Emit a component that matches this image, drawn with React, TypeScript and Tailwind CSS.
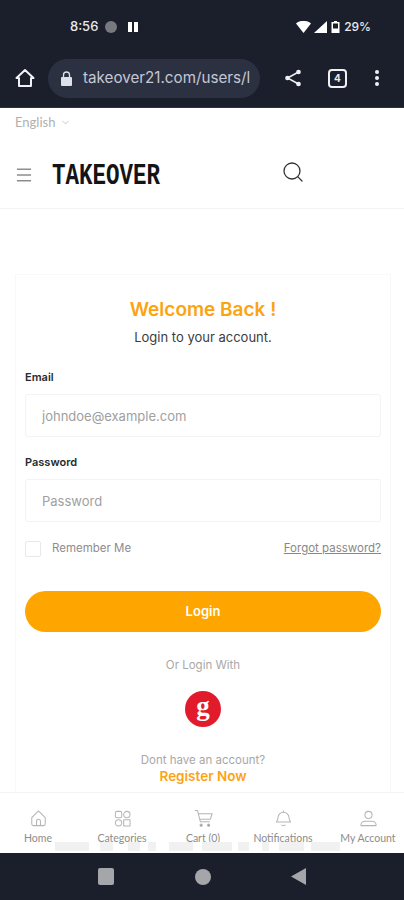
import { ChevronDown, Menu, Search } from "lucide-react";

const sans = "font-['Inter','Liberation_Sans',sans-serif]";

const navItems = [
  {
    label: "Home",
    icon: (
      <>
        <path d="M3.500 11 12 2.500 20.500 11v8a2 2 0 0 1-2 2h-13a2 2 0 0 1-2-2z" />
        <path d="M9.500 21v-5.500a2.500 2.500 0 0 1 5 0V21" />
      </>
    ),
  },
  {
    label: "Categories",
    icon: (
      <>
        <rect x="3" y="3" width="8" height="8" rx="2" />
        <circle cx="17.500" cy="7" r="4" />
        <circle cx="7" cy="17.500" r="4" />
        <rect x="13.500" y="13.500" width="8" height="8" />
      </>
    ),
  },
  {
    label: "Cart (0)",
    icon: (
      <>
        <path d="M1 2h3.500l3.500 14h12" />
        <path d="M5.500 6H23l-2.500 7H7.500" />
        <circle cx="9" cy="20.500" r="1.400" fill="currentColor" />
        <circle cx="18.500" cy="20.500" r="1.400" fill="currentColor" />
      </>
    ),
  },
  {
    label: "Notifications",
    icon: (
      <>
        <path d="M12 4a7 7 0 0 1 7 7c0 2.500 1 4 2 5.500H3c1-1.500 2-3 2-5.500a7 7 0 0 1 7-7z" />
        <path d="M12 2v2M9.500 20c.7 1.300 4.300 1.300 5 0" />
      </>
    ),
  },
  {
    label: "My Account",
    icon: (
      <>
        <circle cx="12" cy="7.500" r="4.500" />
        <path d="M2.500 21v-1.500c0-2.500 3-4 5-4h9c2 0 5 1.500 5 4V21z" />
      </>
    ),
  },
];

const ghostBars = [
  { w: 34, gap: 55 },
  { w: 13, gap: 11 },
  { w: 12, gap: 15 },
  { w: 8, gap: 8 },
  { w: 24, gap: 13 },
  { w: 30, gap: 9 },
  { w: 11, gap: 6 },
  { w: 7, gap: 13 },
  { w: 25, gap: 10 },
  { w: 29, gap: 7 },
];

function Field({ label, placeholder }: { label: string; placeholder: string }) {
  return (
    <div>
      <label className="block text-[11px] leading-[15px] font-semibold text-[#2a2a2a]">{label}</label>
      <input
        readOnly
        placeholder={placeholder}
        className="mt-[9px] block h-[43px] w-full rounded-[3px] border border-[#f3f3f3] bg-white px-4 text-[13px] outline-none placeholder:text-[#a0a0a0]"
      />
    </div>
  );
}

export default function App() {
  return (
    <div className={`flex h-[900px] w-[404px] flex-col overflow-hidden bg-white ${sans}`}>
      {/* android chrome */}
      <div className="h-[108px] shrink-0 border-b border-[#2c2f4a] bg-[#1b1f2b] text-[#e8eaef]">
        <div className="flex h-[52px] items-center pt-[1px] pr-[33px] pl-[70px]">
          <span className="text-[13px] font-medium">8:56</span>
          <span className="ml-[7px] h-[12px] w-[12px] rounded-full bg-[#77797f]" />
          <span className="ml-[11px] flex h-[10px] w-[10px] justify-between">
            <span className="w-[4px] bg-white" />
            <span className="w-[4px] bg-white" />
          </span>
          <div className="ml-auto flex items-center">
            <svg width="15" height="12" viewBox="0 0 15 12" fill="white">
              <path d="M0 2.500C4-1 11-1 15 2.500L7.500 12z" />
            </svg>
            <svg width="13" height="12" viewBox="0 0 13 12" fill="white" className="ml-[3px]">
              <path d="M13 0v12H0z" />
            </svg>
            <svg width="9" height="12" viewBox="0 0 9 12" className="ml-[4px]">
              <path d="M3 0h3v1h2.500v11H.500V1H3z" fill="white" />
              <rect x="2" y="2.500" width="5" height="5" fill="#1b1f2b" />
            </svg>
            <span className="ml-[4px] text-[12px] font-medium">29%</span>
          </div>
        </div>
        <div className="flex h-[55px] items-center pb-[3px] pl-[15px]">
          <svg width="20" height="20" viewBox="0 0 20 20" fill="none" stroke="#f1f2f5" strokeWidth="2">
            <path d="M1.500 10 10 2l8.500 8H16v8H4v-8z" strokeLinejoin="round" />
          </svg>
          <div className="ml-[13px] flex h-[39px] w-[212px] items-center overflow-hidden rounded-full bg-[#2c3142] pl-[13px]">
            <svg width="11" height="15" viewBox="0 0 11 15" fill="#dfe1ea" className="shrink-0">
              <path d="M1 6h9a1 1 0 0 1 1 1v7a1 1 0 0 1-1 1H1a1 1 0 0 1-1-1V7a1 1 0 0 1 1-1z" />
              <path d="M2.500 6V4a3 3 0 0 1 6 0v2" fill="none" stroke="#dfe1ea" strokeWidth="1.300" />
            </svg>
            <span className="ml-[11px] text-[15.200px] whitespace-nowrap text-[#c5c8d3]">takeover21.com/users/l</span>
          </div>
          <svg width="18" height="18" viewBox="0 0 18 18" fill="#eef0f4" stroke="#eef0f4" strokeWidth="1.500" className="ml-[24px]">
            <circle cx="14.500" cy="3" r="1.600" />
            <circle cx="14.500" cy="15" r="1.600" />
            <circle cx="3.500" cy="9" r="1.600" />
            <path d="M14.500 3 3.500 9l11 6" fill="none" />
          </svg>
          <span className="ml-[26px] flex h-[19px] w-[19px] items-center justify-center rounded-[4px] border-2 border-[#eef0f4] text-[10px] font-bold">4</span>
          <span className="ml-[28px] flex h-[16px] flex-col justify-between">
            <span className="h-[4px] w-[4px] rounded-full bg-[#eef0f4]" />
            <span className="h-[4px] w-[4px] rounded-full bg-[#eef0f4]" />
            <span className="h-[4px] w-[4px] rounded-full bg-[#eef0f4]" />
          </span>
        </div>
      </div>

      {/* page */}
      <div className="min-h-0 flex-1 overflow-hidden">
        <div className="flex h-[30px] items-center pb-[1px] pl-[15px] font-['Lato',sans-serif] text-[13px] text-[#b0b0b0]">
          English
          <ChevronDown size={11} className="ml-[5px]" strokeWidth={1.500} />
        </div>
        <div className="flex h-[71px] items-center border-b border-[#f3f3f3] pt-[3px] pl-[14px]">
          <Menu size={20} strokeWidth={1.200} className="text-[#555]" />
          <span className="ml-[18px] inline-block w-[110px] origin-left translate-y-[1px] scale-x-[0.75] font-['Liberation_Mono',monospace] text-[30px] leading-none font-bold whitespace-nowrap text-[#141414]">
            TAKEOVER
          </span>
          <Search size={24} strokeWidth={1.300} className="ml-[119px] -translate-y-[3px] text-[#333]" />
        </div>

        <div className="mt-[65px] ml-[15px] w-[376px] border border-[#f8f8f8] px-[9px] pt-[21px] pb-[8px]">
          <h1 className="text-center text-[19px] leading-[28px] font-semibold text-[#fca311]">Welcome Back !</h1>
          <p className="mt-[3px] text-center text-[13px] leading-[20px] text-[#3c3c3c]">Login to your account.</p>

          <div className="mt-[23px] flex flex-col gap-[18px]">
            <Field label="Email" placeholder="johndoe@example.com" />
            <Field label="Password" placeholder="Password" />
          </div>

          <div className="mt-[18px] flex items-center justify-between">
            <div className="flex items-center">
              <span className="h-[16px] w-[16px] rounded-[2px] border border-[#e8e8e8]" />
              <span className="ml-[11px] text-[11.500px] text-[#8d8d8d]">Remember Me</span>
            </div>
            <a className="text-[11.500px] text-[#888] underline">Forgot password?</a>
          </div>

          <button className="mt-[34px] h-[41px] w-full rounded-full bg-[#ffa500] text-[13px] font-semibold text-white">
            Login
          </button>

          <p className="mt-[25px] text-center text-[11.500px] leading-[16px] text-[#a8a8a8]">Or Login With</p>
          <div className="mt-[18px] flex justify-center">
            <span className="flex h-[36px] w-[36px] items-center justify-center rounded-full bg-[#e21b2c] pb-[5px] font-['Liberation_Serif',serif] text-[27px] leading-none font-bold text-white">
              g
            </span>
          </div>
          <p className="mt-[25px] text-center text-[11.500px] leading-[16px] text-[#a8a8a8]">Dont have an account?</p>
          <p className="mt-0 text-center text-[13.500px] leading-[16px] font-semibold text-[#fca311]">Register Now</p>
        </div>
      </div>

      {/* bottom nav */}
      <div className="flex h-[61px] shrink-0 flex-col border-t border-[#f3f3f3] bg-white">
        <div className="grid h-[49px] grid-cols-[76px_92px_70px_90px_80px] pt-[16px] font-['Lato',sans-serif] text-[10.500px] leading-[12px] text-[#8c8c8c]">
          {navItems.map((item) => (
            <div key={item.label} className="flex flex-col items-center">
              <svg width="19" height="19" viewBox="0 0 24 24" fill="none" stroke="#b5b5b5" strokeWidth="1.300" strokeLinejoin="round">
                {item.icon}
              </svg>
              <span className="mt-[4px] whitespace-nowrap">{item.label}</span>
            </div>
          ))}
        </div>
        <div className="flex h-[10px]">
          {ghostBars.map((bar, i) => (
            <span key={i} className="h-[9px] bg-[#f1f1f1]" style={{ width: bar.w, marginLeft: bar.gap }} />
          ))}
        </div>
      </div>

      {/* android nav bar */}
      <div className="flex h-[47px] shrink-0 items-center bg-[#1b1f2b] pl-[98px]">
        <span className="h-[17px] w-[16px] rounded-[2px] bg-[#a5a6aa]" />
        <span className="ml-[81px] h-[16px] w-[16px] rounded-full bg-[#a5a6aa]" />
        <svg width="16" height="17" viewBox="0 0 16 17" fill="#a5a6aa" className="ml-[80px]">
          <path d="M15 0v17L0 8.500z" />
        </svg>
      </div>
    </div>
  );
}
